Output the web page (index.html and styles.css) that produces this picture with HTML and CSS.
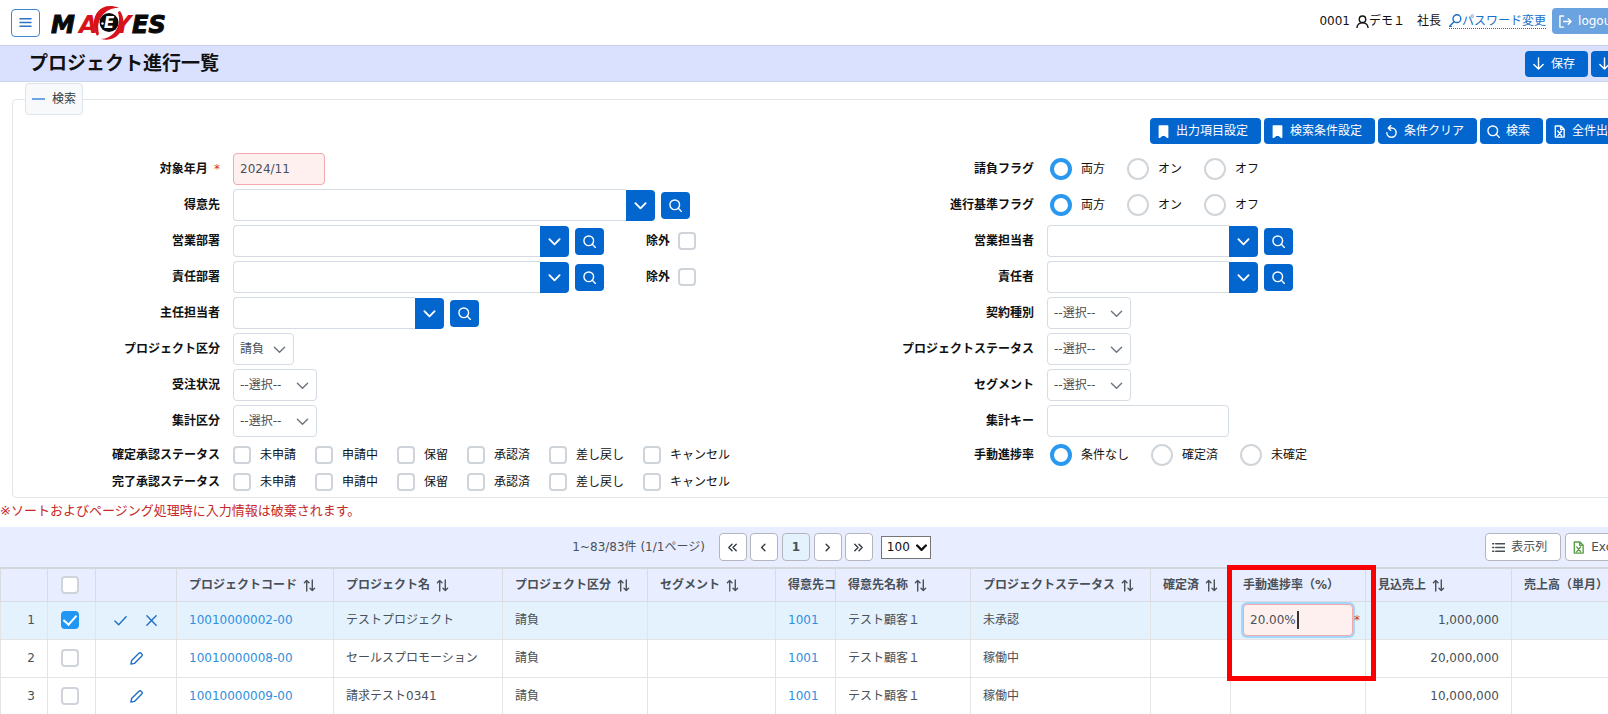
FILE: index.html
```html
<!DOCTYPE html>
<html lang="ja">
<head>
    <meta charset="UTF-8">
    <meta name="viewport" content="width=device-width, initial-scale=1.0">
    <title>プロジェクト進行一覧</title>
    <link rel="stylesheet" href="styles.css">
</head>
<body>
    <svg class="sprite" aria-hidden="true">
        <symbol id="i-down" viewBox="0 0 14 14"><path d="M7 1v12M2 8l5 5 5-5"/></symbol>
        <symbol id="i-bookmark" viewBox="0 0 14 14"><path class="solid" d="M2.500 1h9v12.500L7 10l-4.500 3.500z"/></symbol>
        <symbol id="i-undo" viewBox="0 0 14 14"><path d="M2 8.200a5 5 0 1 0 5-5H3.600M6.200.600L3.500 3.200l2.700 2.600"/></symbol>
        <symbol id="i-search" viewBox="0 0 14 14"><circle cx="6.200" cy="6.200" r="5.200"/><path d="M10 10l3.400 3.400"/></symbol>
        <symbol id="i-file" viewBox="0 0 14 14"><path d="M2.500 1h6l3.500 3.500V13h-9.500zM8.300 1v3.700H12M5.200 6.500l4 5M9.200 6.500l-4 5"/></symbol>
        <symbol id="i-chevron" viewBox="0 0 14 14"><path d="M1.500 4.500L7 10l5.500-5.500"/></symbol>
        <symbol id="i-sort" viewBox="0 0 14 14"><path d="M4 13V1.500M1.500 4L4 1.500 6.500 4M10 1v11.500M7.500 10l2.500 2.500 2.500-2.500"/></symbol>
        <symbol id="i-pencil" viewBox="0 0 14 14"><path d="M1 13l.700-3.800L9.600 1.300a1.600 1.600 0 0 1 2.300 0l.800.800a1.600 1.600 0 0 1 0 2.300L4.800 12.300z"/></symbol>
        <symbol id="i-check" viewBox="0 0 14 14"><path d="M1 7.500l4 4L13 3"/></symbol>
        <symbol id="i-times" viewBox="0 0 14 14"><path d="M2 2l10 10M12 2L2 12"/></symbol>
        <symbol id="i-list" viewBox="0 0 14 14"><path d="M4 3h10M4 7h10M4 11h10M.500 3H2M.500 7H2M.500 11H2"/></symbol>
    </svg>

    <div class="page">
        <header class="topbar">
            <button class="menu-button" type="button" aria-label="メニュー">
                <svg class="icon" viewBox="0 0 14 14"><path d="M1 3h12M1 7h12M1 11h12"/></svg>
            </button>
            <svg class="logo" viewBox="0 0 116 36" role="img" aria-label="MA-EYES">
                <text x="0" y="28" class="logo-letter">M</text>
                <text x="28" y="28" class="logo-letter logo-red">A</text>
                <text x="63" y="28" class="logo-letter logo-red">Y</text>
                <circle cx="58" cy="17.500" r="12" fill="#fff"/>
                <path class="logo-ring" d="M46 31C37 14 48-5 68 3c-13-1-24 11-20 26z"/>
                <path class="logo-ring" d="M69 6C78 19 68 39 50 34c13-1 21-13 17-27z"/>
                <circle cx="58" cy="17.500" r="9.500" fill="#0a0a0a"/>
                <text x="53" y="23" class="logo-e">E</text>
                <circle cx="51.500" cy="18.500" r="1.200" fill="#fff"/>
                <text x="81" y="28" class="logo-letter">ES</text>
            </svg>
            <div class="user-area">
                <span>0001</span>
                <span class="user-name"><svg class="icon" viewBox="0 0 14 14"><circle cx="7" cy="4.500" r="3.500"/><path d="M1 13.500c.500-3.500 2.500-5 6-5s5.500 1.500 6 5"/></svg>デモ１　社長</span>
                <a class="password-link" href="#"><svg class="icon" viewBox="0 0 14 14"><circle cx="8.500" cy="5" r="4.200"/><path d="M5.500 8L.500 13.500l2 .200"/></svg>パスワード変更</a>
                <button class="button logout" type="button"><svg class="icon" viewBox="0 0 14 14"><path d="M5 1H1v12h4M5 7h8M10 4l3 3-3 3"/></svg>logout</button>
            </div>
        </header>

        <div class="titlebar">
            <h1>プロジェクト進行一覧</h1>
            <div class="title-actions">
                <button class="button" type="button"><svg class="icon"><use href="#i-down"/></svg>保存</button>
                <button class="button icon-only" type="button" aria-label="ダウンロード"><svg class="icon"><use href="#i-down"/></svg></button>
            </div>
        </div>

        <form>
            <fieldset class="search">
                <legend><button class="toggle" type="button"><svg class="icon" viewBox="0 0 14 14"><path d="M0 6.500h14"/></svg>検索</button></legend>
                <div class="search-actions">
                    <button class="button" type="button"><svg class="icon"><use href="#i-bookmark"/></svg>出力項目設定</button>
                    <button class="button" type="button"><svg class="icon"><use href="#i-bookmark"/></svg>検索条件設定</button>
                    <button class="button" type="button"><svg class="icon"><use href="#i-undo"/></svg>条件クリア</button>
                    <button class="button" type="button"><svg class="icon"><use href="#i-search"/></svg>検索</button>
                    <button class="button" type="button"><svg class="icon"><use href="#i-file"/></svg>全件出力</button>
                </div>

                <div class="conditions">
                    <div class="column">
                        <div class="row">
                            <label class="caption" for="month">対象年月 <span class="required">*</span></label>
                            <input class="text required-field month" id="month" type="text" value="2024/11">
                        </div>
                        <div class="row">
                            <label class="caption" for="customer">得意先</label>
                            <div class="combo wide"><input class="text" id="customer" type="text"><button type="button" aria-label="候補"><svg class="icon"><use href="#i-chevron"/></svg></button></div>
                            <button class="lookup" type="button" aria-label="得意先検索"><svg class="icon"><use href="#i-search"/></svg></button>
                        </div>
                        <div class="row">
                            <label class="caption" for="sales-dept">営業部署</label>
                            <div class="combo medium"><input class="text" id="sales-dept" type="text"><button type="button" aria-label="候補"><svg class="icon"><use href="#i-chevron"/></svg></button></div>
                            <button class="lookup" type="button" aria-label="営業部署検索"><svg class="icon"><use href="#i-search"/></svg></button>
                            <label class="exclude">除外 <input type="checkbox"></label>
                        </div>
                        <div class="row">
                            <label class="caption" for="resp-dept">責任部署</label>
                            <div class="combo medium"><input class="text" id="resp-dept" type="text"><button type="button" aria-label="候補"><svg class="icon"><use href="#i-chevron"/></svg></button></div>
                            <button class="lookup" type="button" aria-label="責任部署検索"><svg class="icon"><use href="#i-search"/></svg></button>
                            <label class="exclude">除外 <input type="checkbox"></label>
                        </div>
                        <div class="row">
                            <label class="caption" for="chief">主任担当者</label>
                            <div class="combo"><input class="text" id="chief" type="text"><button type="button" aria-label="候補"><svg class="icon"><use href="#i-chevron"/></svg></button></div>
                            <button class="lookup" type="button" aria-label="主任担当者検索"><svg class="icon"><use href="#i-search"/></svg></button>
                        </div>
                        <div class="row">
                            <label class="caption" for="project-type">プロジェクト区分</label>
                            <div class="select short"><select id="project-type"><option>請負</option></select><svg class="icon"><use href="#i-chevron"/></svg></div>
                        </div>
                        <div class="row">
                            <label class="caption" for="order-status">受注状況</label>
                            <div class="select"><select id="order-status"><option>--選択--</option></select><svg class="icon"><use href="#i-chevron"/></svg></div>
                        </div>
                        <div class="row">
                            <label class="caption" for="total-type">集計区分</label>
                            <div class="select"><select id="total-type"><option>--選択--</option></select><svg class="icon"><use href="#i-chevron"/></svg></div>
                        </div>
                        <div class="row options first-options" role="group" aria-labelledby="fixed-status">
                            <span class="caption" id="fixed-status">確定承認ステータス</span>
                            <label><input type="checkbox">未申請</label>
                            <label><input type="checkbox">申請中</label>
                            <label><input type="checkbox">保留</label>
                            <label><input type="checkbox">承認済</label>
                            <label><input type="checkbox">差し戻し</label>
                            <label><input type="checkbox">キャンセル</label>
                        </div>
                        <div class="row options" role="group" aria-labelledby="done-status">
                            <span class="caption" id="done-status">完了承認ステータス</span>
                            <label><input type="checkbox">未申請</label>
                            <label><input type="checkbox">申請中</label>
                            <label><input type="checkbox">保留</label>
                            <label><input type="checkbox">承認済</label>
                            <label><input type="checkbox">差し戻し</label>
                            <label><input type="checkbox">キャンセル</label>
                        </div>
                    </div>

                    <div class="column">
                        <div class="row radios" role="group" aria-labelledby="contract-flag">
                            <span class="caption" id="contract-flag">請負フラグ</span>
                            <label><input type="radio" name="contract-flag" checked>両方</label>
                            <label><input type="radio" name="contract-flag">オン</label>
                            <label><input type="radio" name="contract-flag">オフ</label>
                        </div>
                        <div class="row radios" role="group" aria-labelledby="progress-flag">
                            <span class="caption" id="progress-flag">進行基準フラグ</span>
                            <label><input type="radio" name="progress-flag" checked>両方</label>
                            <label><input type="radio" name="progress-flag">オン</label>
                            <label><input type="radio" name="progress-flag">オフ</label>
                        </div>
                        <div class="row">
                            <label class="caption" for="sales-person">営業担当者</label>
                            <div class="combo"><input class="text" id="sales-person" type="text"><button type="button" aria-label="候補"><svg class="icon"><use href="#i-chevron"/></svg></button></div>
                            <button class="lookup" type="button" aria-label="営業担当者検索"><svg class="icon"><use href="#i-search"/></svg></button>
                        </div>
                        <div class="row">
                            <label class="caption" for="manager">責任者</label>
                            <div class="combo"><input class="text" id="manager" type="text"><button type="button" aria-label="候補"><svg class="icon"><use href="#i-chevron"/></svg></button></div>
                            <button class="lookup" type="button" aria-label="責任者検索"><svg class="icon"><use href="#i-search"/></svg></button>
                        </div>
                        <div class="row">
                            <label class="caption" for="contract-type">契約種別</label>
                            <div class="select"><select id="contract-type"><option>--選択--</option></select><svg class="icon"><use href="#i-chevron"/></svg></div>
                        </div>
                        <div class="row">
                            <label class="caption" for="project-status">プロジェクトステータス</label>
                            <div class="select"><select id="project-status"><option>--選択--</option></select><svg class="icon"><use href="#i-chevron"/></svg></div>
                        </div>
                        <div class="row">
                            <label class="caption" for="segment">セグメント</label>
                            <div class="select"><select id="segment"><option>--選択--</option></select><svg class="icon"><use href="#i-chevron"/></svg></div>
                        </div>
                        <div class="row">
                            <label class="caption" for="total-key">集計キー</label>
                            <input class="text total-key" id="total-key" type="text">
                        </div>
                        <div class="row radios options first-options" role="group" aria-labelledby="manual-rate">
                            <span class="caption" id="manual-rate">手動進捗率</span>
                            <label><input type="radio" name="manual-rate" checked>条件なし</label>
                            <label><input type="radio" name="manual-rate">確定済</label>
                            <label><input type="radio" name="manual-rate">未確定</label>
                        </div>
                    </div>
                </div>
            </fieldset>
        </form>

        <p class="note">※ソートおよびページング処理時に入力情報は破棄されます。</p>

        <div class="table-bar">
            <div class="pager">
                <span class="pager-info">1~83/83件 (1/1ページ)</span>
                <div class="pager-group">
                    <button type="button" aria-label="最初"><svg class="icon" viewBox="0 0 14 14"><path d="M6.500 3.500L3 7l3.500 3.500M11 3.500L7.500 7l3.500 3.500"/></svg></button>
                    <button type="button" aria-label="前"><svg class="icon" viewBox="0 0 14 14"><path d="M8.500 3.500L5 7l3.500 3.500"/></svg></button>
                </div>
                <button class="current" type="button">1</button>
                <div class="pager-group">
                    <button type="button" aria-label="次"><svg class="icon" viewBox="0 0 14 14"><path d="M5.500 3.500L9 7l-3.500 3.500"/></svg></button>
                    <button type="button" aria-label="最後"><svg class="icon" viewBox="0 0 14 14"><path d="M3 3.500L6.500 7 3 10.500M7.500 3.500L11 7l-3.500 3.500"/></svg></button>
                </div>
                <div class="select page-size"><select aria-label="表示件数"><option>100</option></select><svg class="icon"><use href="#i-chevron"/></svg></div>
            </div>
            <div class="table-tools">
                <button type="button"><svg class="icon"><use href="#i-list"/></svg>表示列</button>
                <button class="excel" type="button"><svg class="icon"><use href="#i-file"/></svg>Excel</button>
            </div>
        </div>

        <table class="projects">
            <colgroup>
                <col class="c-no"><col class="c-check"><col class="c-edit"><col class="c-code"><col class="c-name"><col class="c-type"><col class="c-segment"><col class="c-customer"><col class="c-customer-name"><col class="c-status"><col class="c-fixed"><col class="c-rate"><col class="c-forecast"><col class="c-sales">
            </colgroup>
            <thead>
                <tr>
                    <th></th>
                    <th class="center check"><input type="checkbox" aria-label="すべて選択"></th>
                    <th></th>
                    <th>プロジェクトコード<svg class="icon"><use href="#i-sort"/></svg></th>
                    <th>プロジェクト名<svg class="icon"><use href="#i-sort"/></svg></th>
                    <th>プロジェクト区分<svg class="icon"><use href="#i-sort"/></svg></th>
                    <th>セグメント<svg class="icon"><use href="#i-sort"/></svg></th>
                    <th>得意先コード</th>
                    <th>得意先名称<svg class="icon"><use href="#i-sort"/></svg></th>
                    <th>プロジェクトステータス<svg class="icon"><use href="#i-sort"/></svg></th>
                    <th>確定済<svg class="icon"><use href="#i-sort"/></svg></th>
                    <th>手動進捗率（%）</th>
                    <th>見込売上<svg class="icon"><use href="#i-sort"/></svg></th>
                    <th>売上高（単月）</th>
                </tr>
            </thead>
            <tbody>
                <tr class="selected">
                    <td class="number">1</td>
                    <td class="center check"><input type="checkbox" aria-label="1行目を選択" checked></td>
                    <td class="center"><button class="row-button" type="button" aria-label="確定"><svg class="icon"><use href="#i-check"/></svg></button><button class="row-button" type="button" aria-label="取消"><svg class="icon"><use href="#i-times"/></svg></button></td>
                    <td><a href="#">10010000002-00</a></td>
                    <td>テストプロジェクト</td>
                    <td>請負</td>
                    <td></td>
                    <td><a href="#">1001</a></td>
                    <td>テスト顧客１</td>
                    <td>未承認</td>
                    <td></td>
                    <td class="rate-cell">
                        <div class="rate-edit"><input class="text required-field rate" type="text" value="20.00%" aria-label="手動進捗率"><span class="caret"></span><span class="required">*</span></div>
                        <div class="highlight"></div>
                    </td>
                    <td class="number">1,000,000</td>
                    <td></td>
                </tr>
                <tr>
                    <td class="number">2</td>
                    <td class="center check"><input type="checkbox" aria-label="2行目を選択"></td>
                    <td class="center"><button class="row-button" type="button" aria-label="編集"><svg class="icon"><use href="#i-pencil"/></svg></button></td>
                    <td><a href="#">10010000008-00</a></td>
                    <td>セールスプロモーション</td>
                    <td>請負</td>
                    <td></td>
                    <td><a href="#">1001</a></td>
                    <td>テスト顧客１</td>
                    <td>稼働中</td>
                    <td></td>
                    <td></td>
                    <td class="number">20,000,000</td>
                    <td></td>
                </tr>
                <tr>
                    <td class="number">3</td>
                    <td class="center check"><input type="checkbox" aria-label="3行目を選択"></td>
                    <td class="center"><button class="row-button" type="button" aria-label="編集"><svg class="icon"><use href="#i-pencil"/></svg></button></td>
                    <td><a href="#">10010000009-00</a></td>
                    <td>請求テスト0341</td>
                    <td>請負</td>
                    <td></td>
                    <td><a href="#">1001</a></td>
                    <td>テスト顧客１</td>
                    <td>稼働中</td>
                    <td></td>
                    <td></td>
                    <td class="number">10,000,000</td>
                    <td></td>
                </tr>
            </tbody>
        </table>
    </div>
</body>
</html>
```

FILE: styles.css
```css
* {
    box-sizing: border-box;
}
body {
    margin: 0;
    overflow: hidden;
    background-color: #fff;
    color: #111;
    font-family: "DejaVu Sans", "Noto Sans CJK JP", sans-serif;
    font-size: 12px;
    line-height: 18px;
}
button, input, select {
    margin: 0;
    font: inherit;
}
button {
    cursor: pointer;
}
.sprite {
    display: none;
}
.icon {
    width: 13px;
    height: 13px;
    flex: none;
    fill: none;
    stroke: currentColor;
    stroke-width: 1.5;
    stroke-linecap: round;
    stroke-linejoin: round;
}
.solid {
    fill: currentColor;
}

/* wider than the window, the right end is cut off */
.page {
    width: calc(100% + 44px);
}

/* header */
.topbar {
    display: flex;
    align-items: center;
    height: 45px;
    padding: 0 18px 0 11px;
}
.menu-button {
    display: flex;
    align-items: center;
    justify-content: center;
    width: 29px;
    height: 28px;
    padding: 0;
    border: 1px solid #3b86cf;
    border-radius: 4px;
    background: #fff;
    color: #2a75c4;
}
.logo {
    width: 116px;
    height: 36px;
    margin-left: 11px;
}
.logo-letter {
    font: italic bold 24px "DejaVu Sans", sans-serif;
    fill: #0a0a0a;
    stroke: #0a0a0a;
}
.logo-letter.logo-red {
    fill: #d8121b;
    stroke: none;
}
.logo-ring {
    fill: #d8121b;
}
.logo-e {
    font: italic bold 15px "DejaVu Sans", sans-serif;
    fill: #fff;
}
.user-area {
    display: flex;
    align-items: center;
    gap: 6px;
    margin-left: auto;
    margin-top: -3px;
}
.user-name, .password-link {
    display: flex;
    align-items: center;
}
.user-name {
    margin-right: 2px;
}
.password-link {
    color: #1a6fc9;
    text-decoration: none;
    border-bottom: 1px dotted #1a6fc9;
    line-height: 14px;
}
.button {
    display: flex;
    align-items: center;
    gap: 6px;
    height: 26px;
    padding: 0 13px 0 7px;
    border: 0;
    border-radius: 4px;
    background: #0366cf;
    color: #fff;
    white-space: nowrap;
}
.logout {
    padding: 0 18px 0 7px;
    background: #6ba3e0;
}
.titlebar {
    display: flex;
    align-items: center;
    justify-content: space-between;
    height: 37px;
    padding: 0 18px 0 29px;
    border-top: 1px solid #c9d0e6;
    border-bottom: 1px solid #c9d8ea;
    background: #dae1ff;
}
.titlebar h1 {
    margin: 0;
    padding-bottom: 2px;
    font-size: 19px;
    line-height: 28px;
    font-weight: bold;
}
.title-actions, .search-actions {
    display: flex;
    gap: 3px;
}
.title-actions .icon-only {
    width: 43px;
}

/* search conditions */
.search {
    min-width: 0;
    margin: 1px 12px 0;
    padding: 3px 0 2px;
    border: 1px solid #e2e5ea;
    border-radius: 4px;
}
.search legend {
    margin-left: 12px;
    padding: 0;
}
.toggle {
    display: flex;
    align-items: center;
    gap: 7px;
    height: 32px;
    padding: 0 6px;
    border: 1px solid #dee4e9;
    border-radius: 4px;
    background: #f8f9fa;
    color: #343a40;
}
.toggle .icon {
    color: #3f8ae0;
}
.search-actions {
    justify-content: flex-end;
    padding-right: 6px;
}
.conditions {
    display: grid;
    grid-template-columns: 1fr 1fr;
    margin-top: 7px;
}
.column + .column {
    padding-left: 1px;
}
.row {
    display: flex;
    align-items: center;
    height: 36px;
}
.options {
    height: 27px;
}
.first-options {
    margin-top: 2px;
}
.caption {
    flex: none;
    width: 207px;
    margin-right: 13px;
    text-align: right;
    font-weight: bold;
}
.required {
    color: #d32f2f;
    font-weight: normal;
}
.caption .required {
    margin-left: 2px;
}
.text {
    height: 32px;
    padding: 0 6px;
    border: 1px solid #d5dce3;
    border-radius: 4px;
    background: #fff;
    color: #495057;
    outline: none;
}
.required-field {
    border-color: #f0a9ad;
    background: #fff0f0;
}
.month {
    width: 92px;
}
.total-key {
    width: 182px;
}
.combo {
    display: flex;
    align-items: center;
    width: 211px;
}
.combo.medium {
    width: 336px;
}
.combo.wide {
    width: 422px;
}
.combo .text {
    flex: 1;
    min-width: 0;
    border-right: 0;
    border-radius: 4px 0 0 4px;
}
.combo button, .lookup {
    display: flex;
    align-items: center;
    justify-content: center;
    width: 29px;
    height: 31px;
    padding: 0;
    border: 0;
    border-radius: 0 4px 4px 0;
    background: #0366cf;
    color: #fff;
}
.combo .icon {
    stroke-width: 2;
}
.lookup {
    height: 27px;
    margin-left: 6px;
    border-radius: 4px;
}
.exclude {
    display: flex;
    align-items: center;
    gap: 8px;
    margin-left: 42px;
    font-weight: bold;
}
.select {
    position: relative;
}
.select select {
    appearance: none;
    height: 32px;
    padding: 0 34px 0 6px;
    border: 1px solid #d5dce3;
    border-radius: 4px;
    background: #fff;
    color: #495057;
}
.select.short select {
    padding-right: 28px;
}
.select .icon {
    position: absolute;
    top: 10px;
    right: 8px;
    color: #6c757d;
    pointer-events: none;
}
.options label {
    display: flex;
    align-items: center;
    gap: 9px;
    margin-right: 19px;
}
.radios label {
    display: flex;
    align-items: center;
    gap: 9px;
    margin: 0 19px 0 3px;
}
input[type="checkbox"] {
    appearance: none;
    display: grid;
    place-items: center;
    width: 18px;
    height: 18px;
    border: 2px solid #ced4da;
    border-radius: 4px;
    background: #fff;
}
input[type="checkbox"]:checked {
    border-color: #2196f3;
    background: #2196f3;
}
input[type="checkbox"]:checked::before {
    content: "";
    width: 6px;
    height: 11px;
    margin-top: -3px;
    border: solid #fff;
    border-width: 0 2px 2px 0;
    transform: rotate(42deg);
}
input[type="radio"] {
    appearance: none;
    width: 22px;
    height: 22px;
    border: 2px solid #d0d5da;
    border-radius: 50%;
    background: #fff;
}
input[type="radio"]:checked {
    border: 4px solid #2b98f0;
}
.note {
    margin: 0;
    padding: 4px 0 7px;
    color: #c62828;
    font-size: 13px;
}

/* table toolbar */
.table-bar {
    display: flex;
    align-items: center;
    height: 40px;
    padding-right: 15px;
    background: #e8eeff;
    color: #495057;
}
.pager {
    display: flex;
    flex: 1;
    align-items: center;
    justify-content: center;
    padding-left: 18px;
}
.pager-info {
    margin-right: 14px;
}
.pager button {
    display: flex;
    align-items: center;
    justify-content: center;
    width: 28px;
    height: 28px;
    padding: 0;
    border: 1px solid #b3b7bd;
    border-radius: 4px;
    background: #fff;
    color: #343a40;
}
.pager-group {
    display: flex;
    gap: 3px;
}
.pager .current {
    margin: 0 4px;
    background: #e3f2fd;
    font-weight: bold;
    color: #495057;
}
.page-size {
    margin-left: 8px;
}
.select.page-size select {
    height: 23px;
    padding: 0 20px 0 5px;
    border: 1px solid #767676;
    border-radius: 0;
    color: #111;
}
.page-size .icon {
    top: 6px;
    right: 4px;
    width: 11px;
    height: 11px;
    color: #111;
    stroke-width: 3;
}
.table-tools {
    display: flex;
    gap: 4px;
}
.table-tools button {
    display: flex;
    align-items: center;
    gap: 6px;
    height: 28px;
    padding: 0 13px 0 6px;
    border: 1px solid #b3b7bd;
    border-radius: 4px;
    background: #fff;
    color: #495057;
}
.table-tools .excel .icon {
    color: #5a9e46;
}

/* project table */
.projects {
    width: 100%;
    table-layout: fixed;
    border-collapse: collapse;
    color: #495057;
}
.c-no { width: 47px; }
.c-check { width: 48px; }
.c-edit { width: 81px; }
.c-code { width: 157px; }
.c-name { width: 169px; }
.c-type { width: 145px; }
.c-segment { width: 128px; }
.c-customer { width: 60px; }
.c-customer-name { width: 135px; }
.c-status { width: 180px; }
.c-fixed { width: 80px; }
.c-rate { width: 135px; }
.c-forecast { width: 146px; }
.projects th, .projects td {
    height: 38px;
    padding: 0 0 0 12px;
    border: 1px solid #e4e4e6;
    text-align: left;
    white-space: nowrap;
    overflow: hidden;
}
.projects th {
    height: 33px;
    border-color: #d9dbe2;
    background: #e8eeff;
}
.projects thead tr {
    border-top: 2px solid #d4d6dc;
}
.projects th .icon {
    margin-left: 6px;
    vertical-align: -3px;
}
.projects .center {
    padding: 0;
    text-align: center;
}
.projects .check {
    padding-right: 4px;
}
.projects .center input {
    margin: 0 auto;
}
.projects .number {
    padding-right: 12px;
    text-align: right;
}
.projects a {
    color: #2f8fe0;
    text-decoration: none;
}
.selected {
    background: #e3f2fd;
}
.row-button {
    padding: 0;
    border: 0;
    background: none;
    color: #1f6fc5;
    vertical-align: middle;
}
.row-button + .row-button {
    margin-left: 18px;
}
.row-button .icon {
    display: block;
}
.projects .rate-cell {
    position: relative;
    overflow: visible;
}
.rate-edit {
    display: flex;
    align-items: center;
    gap: 1px;
    position: relative;
}
.rate {
    width: 110px;
    box-shadow: 0 0 0 2px #a6d5fa;
}
.caret {
    position: absolute;
    left: 54px;
    width: 2px;
    height: 18px;
    background: #333;
}
/* frame around the rate being edited */
.highlight {
    position: absolute;
    top: -37px;
    left: -4px;
    width: 149px;
    height: 116px;
    border: 5px solid #fa0000;
    pointer-events: none;
}
```
